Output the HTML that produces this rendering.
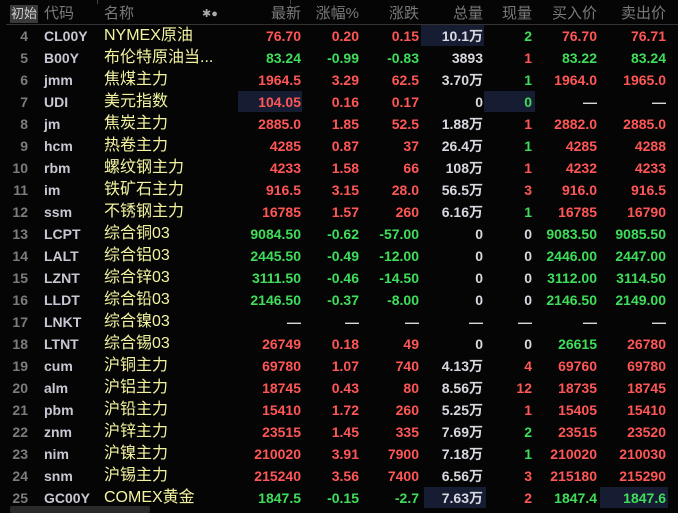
<!DOCTYPE html><html><head><meta charset="utf-8"><style>
body{margin:0;width:678px;height:513px;background:#050505;overflow:hidden;font-family:"Liberation Sans","Noto Sans CJK SC",sans-serif;position:relative}
.r{position:absolute;left:0;width:678px;height:22px;line-height:22px}
.c{position:absolute;top:0;white-space:nowrap;font-weight:bold;font-size:14px}
.R{color:#ff5656}.G{color:#3ede5a}.W{color:#d8d8e0}
.i{color:#7c7c7c;text-align:right;width:22px;left:6px}
.cd{left:44px;color:#c8c8d4}
.nm{left:104px;color:#f4f4a0;font-weight:normal;font-size:16px}
.n{text-align:right}
.hd{position:absolute;top:4px;height:20px;line-height:20px;font-size:15px;color:#7a7a7a;white-space:nowrap}
.hl{position:absolute;background:#161d33}
</style></head><body>
<div style="position:absolute;left:10px;top:5px;width:28px;height:18px;background:#3a3a3a;color:#ccc;font-size:13px;line-height:18px;text-align:center">初始</div>
<div class="hd" style="left:44px">代码</div>
<div class="hd" style="left:104px">名称</div>
<div class="hd" style="left:202px;font-size:11px;color:#aaa">✱●</div>
<div class="hd" style="right:377px">最新</div>
<div class="hd" style="right:319px">涨幅%</div>
<div class="hd" style="right:259px">涨跌</div>
<div class="hd" style="right:195px">总量</div>
<div class="hd" style="right:146px">现量</div>
<div class="hd" style="right:81px">买入价</div>
<div class="hd" style="right:12px">卖出价</div>
<div style="position:absolute;left:6px;top:24px;width:672px;height:1px;background:#333"></div>
<div style="position:absolute;left:97px;top:0;width:1px;height:4px;background:#444"></div>
<div style="position:absolute;left:290px;top:0;width:1px;height:4px;background:#444"></div>
<div style="position:absolute;left:10px;top:506px;width:140px;height:7px;background:#2a2a2a;border-radius:2px"></div>
<div class="hl" style="left:421px;top:25px;width:63px;height:21px"></div>
<div class="hl" style="left:238px;top:91px;width:64px;height:21px"></div>
<div class="hl" style="left:484px;top:91px;width:51px;height:21px"></div>
<div class="hl" style="left:424px;top:487px;width:62px;height:21px"></div>
<div class="hl" style="left:600px;top:487px;width:68px;height:21px"></div>
<div id="t"></div>
<script>
var D=[
[4,"CL00Y","NYMEX原油","76.70R","0.20R","0.15R","10.1万W","2G","76.70R","76.71R"],
[5,"B00Y","布伦特原油当...","83.24G","-0.99G","-0.83G","3893W","1R","83.22G","83.24G"],
[6,"jmm","焦煤主力","1964.5R","3.29R","62.5R","3.70万W","1G","1964.0R","1965.0R"],
[7,"UDI","美元指数","104.05R","0.16R","0.17R","0W","0G","—W","—W"],
[8,"jm","焦炭主力","2885.0R","1.85R","52.5R","1.88万W","1R","2882.0R","2885.0R"],
[9,"hcm","热卷主力","4285R","0.87R","37R","26.4万W","1G","4285R","4288R"],
[10,"rbm","螺纹钢主力","4233R","1.58R","66R","108万W","1R","4232R","4233R"],
[11,"im","铁矿石主力","916.5R","3.15R","28.0R","56.5万W","3R","916.0R","916.5R"],
[12,"ssm","不锈钢主力","16785R","1.57R","260R","6.16万W","1G","16785R","16790R"],
[13,"LCPT","综合铜03","9084.50G","-0.62G","-57.00G","0W","0W","9083.50G","9085.50G"],
[14,"LALT","综合铝03","2445.50G","-0.49G","-12.00G","0W","0W","2446.00G","2447.00G"],
[15,"LZNT","综合锌03","3111.50G","-0.46G","-14.50G","0W","0W","3112.00G","3114.50G"],
[16,"LLDT","综合铅03","2146.50G","-0.37G","-8.00G","0W","0W","2146.50G","2149.00G"],
[17,"LNKT","综合镍03","—W","—W","—W","—W","—W","—W","—W"],
[18,"LTNT","综合锡03","26749R","0.18R","49R","0W","0W","26615G","26780R"],
[19,"cum","沪铜主力","69780R","1.07R","740R","4.13万W","4R","69760R","69780R"],
[20,"alm","沪铝主力","18745R","0.43R","80R","8.56万W","12R","18735R","18745R"],
[21,"pbm","沪铅主力","15410R","1.72R","260R","5.25万W","1R","15405R","15410R"],
[22,"znm","沪锌主力","23515R","1.45R","335R","7.69万W","2G","23515R","23520R"],
[23,"nim","沪镍主力","210020R","3.91R","7900R","7.18万W","1G","210020R","210030R"],
[24,"snm","沪锡主力","215240R","3.56R","7400R","6.56万W","3R","215180R","215290R"],
[25,"GC00Y","COMEX黄金","1847.5G","-0.15G","-2.7G","7.63万W","2R","1847.4G","1847.6G"]];
var RT=[377,319,259,195,146,81,12],h="";
D.forEach(function(d,k){h+='<div class="r" style="top:'+(25+22*k)+'px"><div class="c i">'+d[0]+'</div><div class="c cd">'+d[1]+'</div><div class="c nm">'+d[2]+'</div>';
for(var j=0;j<7;j++){var s=d[3+j],c=s.slice(-1),v=s.slice(0,-1);h+='<div class="c n '+c+'" style="right:'+RT[j]+'px">'+v+'</div>';}
h+='</div>';});
document.getElementById('t').innerHTML=h;
</script>
</body></html>
